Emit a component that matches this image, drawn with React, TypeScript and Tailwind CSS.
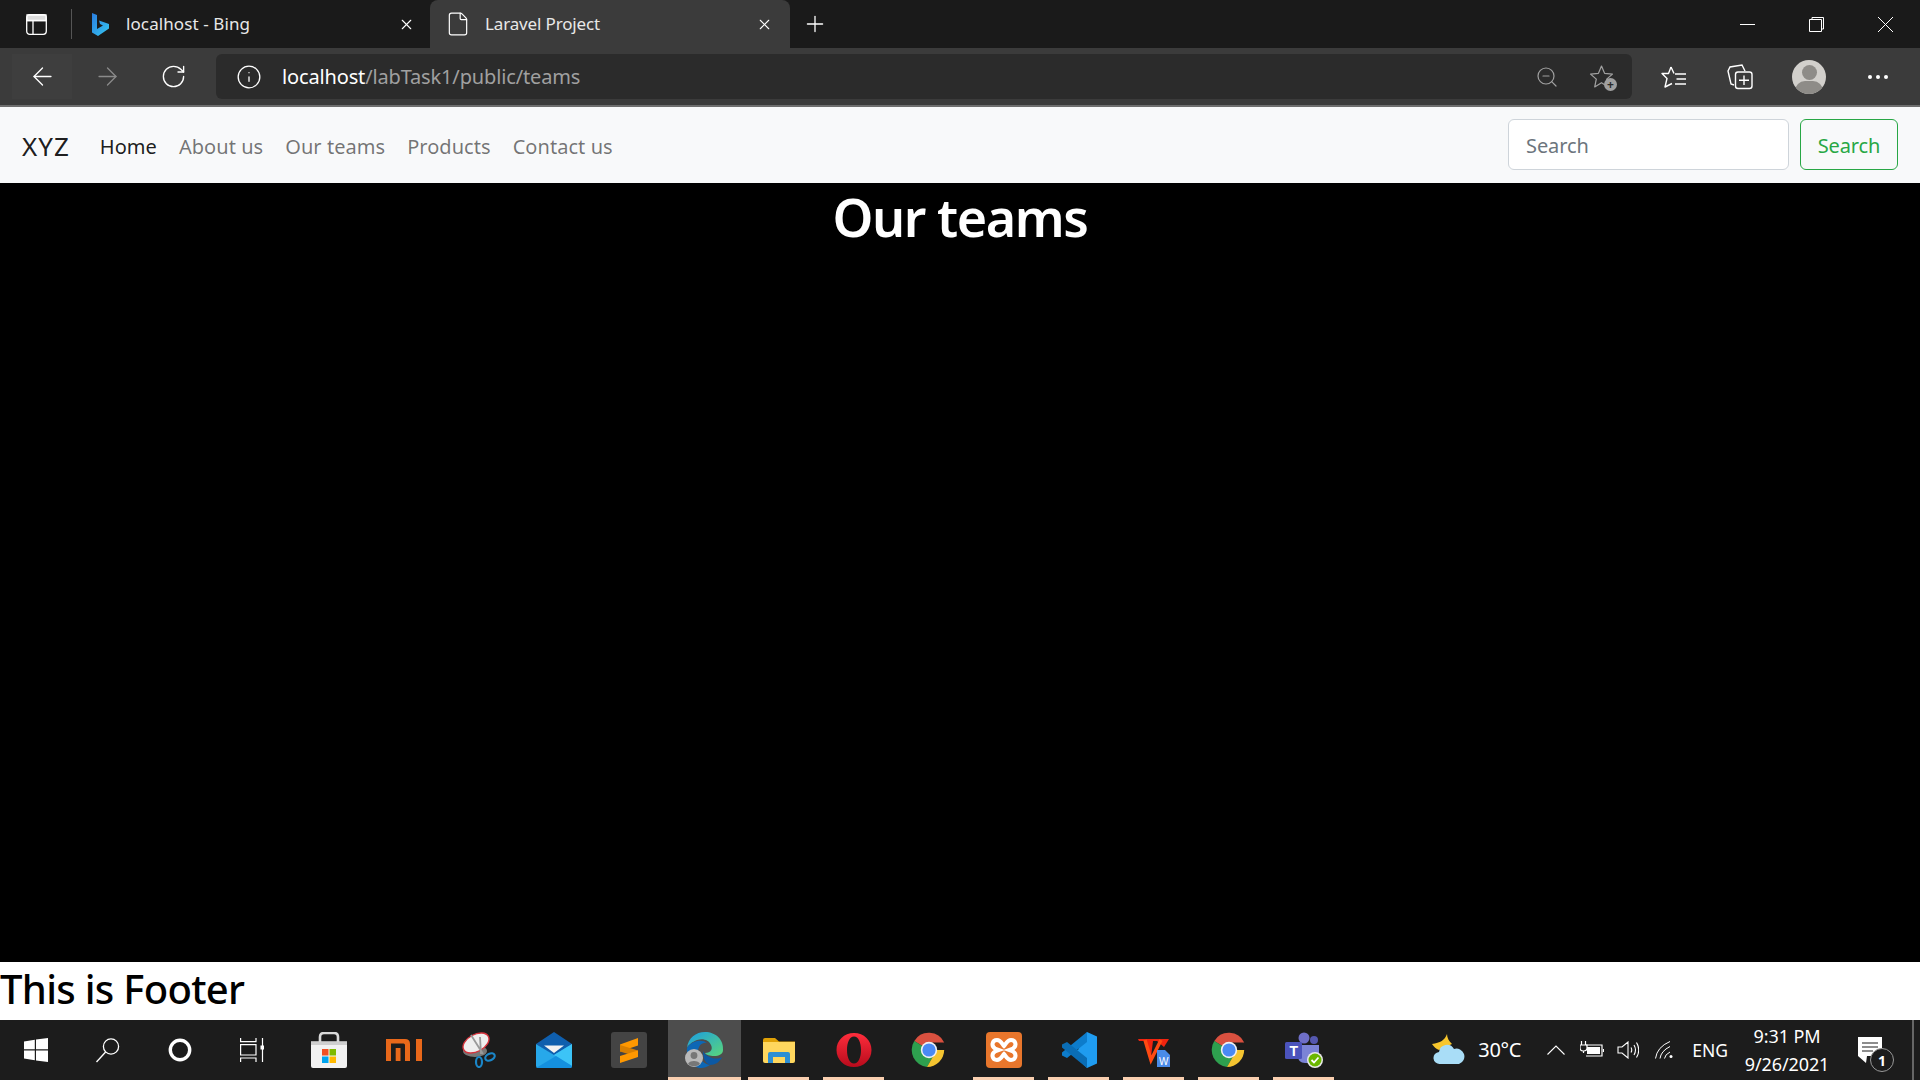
import { ArrowLeft, ArrowRight, File, Info, Plus, RotateCw, X, ZoomOut } from "lucide-react";

const navLinks = ["About us", "Our teams", "Products", "Contact us"];

const WinLogo = () => (
    <svg width="24" height="24" viewBox="0 0 24 24" fill="#fff">
        <path d="M0 3.4 10.8 1.7V11.3H0ZM12 1.5 24 0V11.3H12ZM0 12.6H10.8V22.2L0 20.6ZM12 12.6H24V24L12 22.4Z" />
    </svg>
);

const TaskSearch = () => (
    <svg width="26" height="26" viewBox="0 0 26 26" fill="none" stroke="#fff" strokeWidth="1.3">
        <circle cx="16" cy="9.5" r="7.6" />
        <path d="M10.6 15 1.5 25" />
    </svg>
);

const Cortana = () => (
    <svg width="24" height="24" viewBox="0 0 24 24" fill="none">
        <circle cx="12" cy="12" r="9.7" stroke="#fff" strokeWidth="3.4" />
    </svg>
);

const TaskView = () => (
    <svg width="24" height="24" viewBox="0 0 24 24" fill="none" stroke="#fff" strokeWidth="1.2">
        <path d="M.6 0V3.6H16V0M.6 6.6H16V17H.6ZM.6 24V20H16V24M22.5 0V24" />
        <rect x="20.5" y="7.5" width="4" height="4" fill="#fff" stroke="none" />
    </svg>
);

const Store = () => (
    <svg width="36" height="36" viewBox="0 0 36 36">
        <path d="M9 12V5q0-4 4-4h10q4 0 4 4v7" fill="none" stroke="#d9d9d9" strokeWidth="2.6" />
        <path d="M0 9.5H36V34q0 2-2 2H2q-2 0-2-2Z" fill="#f2f2f2" />
        <path d="M0 9.5H36V13H0Z" fill="#cfcfcf" />
        <rect x="11" y="17" width="6.5" height="6.5" fill="#f25022" />
        <rect x="18.5" y="17" width="6.5" height="6.5" fill="#7fba00" />
        <rect x="11" y="24.5" width="6.5" height="6.5" fill="#00a4ef" />
        <rect x="18.5" y="24.5" width="6.5" height="6.5" fill="#ffb900" />
    </svg>
);

const Mi = () => (
    <svg width="36" height="36" viewBox="0 0 36 36" fill="#e8681a">
        <path d="M0 7H19Q24 7 24 12V29H19V13Q19 11.500 17.500 11.500H5V29H0Z" />
        <path d="M9.700 16H14.500V29H9.700ZM30 7H36V29H30Z" />
    </svg>
);

const Snip = () => (
    <svg width="36" height="36" viewBox="0 0 36 36" fill="none">
        <ellipse cx="14" cy="19" rx="12" ry="6" fill="#777" />
        <ellipse cx="15" cy="11" rx="14" ry="8.500" transform="rotate(-28 15 11)" fill="#eee" stroke="#d5333c" strokeWidth="1.400" />
        <path d="M10 3 22 22M19 5 20 22" stroke="#999" strokeWidth="1.800" />
        <ellipse cx="18" cy="30" rx="3" ry="5" stroke="#1b86c8" strokeWidth="2.200" />
        <ellipse cx="29" cy="25" rx="5" ry="3.200" stroke="#1b86c8" strokeWidth="2.200" transform="rotate(-25 29 25)" />
    </svg>
);

const Mail = () => (
    <svg width="36" height="36" viewBox="0 0 36 36">
        <path d="M0 12 18 0 36 12 18 24Z" fill="#0f5fae" />
        <path d="M8 13.500H28L18 21Z" fill="#f2f2f2" />
        <path d="M0 12 18 23 36 12V34q0 2-2 2H2q-2 0-2-2Z" fill="#27a8ea" />
        <path d="M18 23 36 12V34Z" fill="#3cc4f7" />
        <path d="M0 36H34q2 0 2-2L20 24Z" fill="#1490df" />
    </svg>
);

const Sublime = () => (
    <svg width="36" height="36" viewBox="0 0 36 36">
        <rect width="36" height="36" rx="3" fill="#444" />
        <path d="M27 6V13.500L9 19.500V12.500Z" fill="#ff9800" />
        <path d="M9 13 27 18.500V25L9 19.500Z" fill="#d97f00" />
        <path d="M27 18.500V25L9 31V24Z" fill="#ff9800" />
    </svg>
);

const Edge = () => (
    <svg width="40" height="36" viewBox="0 0 40 36">
        <defs>
            <linearGradient id="edgeTop" x1="0" y1="0" x2="1" y2="1">
                <stop offset="0" stopColor="#1b9de2" />
                <stop offset="1" stopColor="#5ad67a" />
            </linearGradient>
        </defs>
        <path d="M2 16C3 6 11 0 20 0c11 0 19 8 18 18 0 4-4 6-9 6-4 0-8-1-9-3 6 0 8-4 6-8C24 8 18 6 12 8 7 10 3 13 2 16Z" fill="url(#edgeTop)" />
        <path d="M2 16C7 8 17 7 22 11c-5-1-9 3-9 9 0 7 6 12 12 13-3 2-6 3-9 3C7 36 1 26 2 16Z" fill="#0d67b5" />
        <path d="M25 33c5 0 10-3 12-8-3 2-9 2-12 0-3-1-6-3-7-6 0 7 2 12 7 14Z" fill="#0c59a4" />
        <circle cx="9" cy="26" r="9" fill="#b9b9b9" />
        <circle cx="9" cy="23.500" r="3.400" fill="#777" />
        <path d="M3 32c1-4 11-4 12 0-3 3-9 3-12 0Z" fill="#777" />
    </svg>
);

const Explorer = () => (
    <svg width="36" height="36" viewBox="0 0 36 36">
        <path d="M2 8q0-2 2-2H14L18 9.500H34V13H2Z" fill="#e0a106" />
        <path d="M2 10H34V29q0 2-2 2H4q-2 0-2-2Z" fill="#ffd75e" />
        <path d="M7 31V22q0-2 2-2H27q2 0 2 2V31H24V25H12V31Z" fill="#2d8fd5" />
        <rect x="12" y="25" width="12" height="6" fill="#ffd75e" />
    </svg>
);

const Opera = () => (
    <svg width="36" height="36" viewBox="0 0 36 36">
        <defs>
            <linearGradient id="operaFill" x1="0" y1="0" x2="0" y2="1">
                <stop offset="0" stopColor="#ff2d3c" />
                <stop offset="1" stopColor="#b80b1c" />
            </linearGradient>
        </defs>
        <path fillRule="evenodd" d="M18 1C28 1 35.500 8.500 35.500 18S28 35 18 35 .5 27.500 .5 18 8 1 18 1ZM18 4.500C13.500 4.500 11 10.500 11 18S13.500 31.500 18 31.500 25 25.500 25 18 22.500 4.500 18 4.500Z" fill="url(#operaFill)" />
    </svg>
);

const Chrome = () => (
    <svg width="36" height="36" viewBox="0 0 36 36">
        <path d="M18 18 3.300 9A17 17 0 0 1 33.200 10.500H18Z" fill="#d9503f" />
        <path d="M18 18 3.300 9A17 17 0 0 0 16 34.900L23.500 22Z" fill="#2e9f4f" />
        <path d="M18 18H33.200A17 17 0 0 1 16 34.900L24 21Z" fill="#f4c430" />
        <circle cx="18" cy="18" r="8.200" fill="#f1f1f1" />
        <circle cx="18" cy="18" r="6.600" fill="#4a8af4" />
    </svg>
);

const Xampp = () => (
    <svg width="36" height="36" viewBox="0 0 36 36" fill="none">
        <rect width="36" height="36" rx="4" fill="#e8762c" />
        <path d="M11 8C6 8 5 14 9 16.500L13 18 9 19.500C5 22 6 28 11 28 15 28 16 24 18 22 20 24 21 28 25 28 30 28 31 22 27 19.500L23 18 27 16.500C31 14 30 8 25 8 21 8 20 12 18 14 16 12 15 8 11 8Z" stroke="#fff" strokeWidth="4" />
    </svg>
);

const VsCode = () => (
    <svg width="36" height="36" viewBox="0 0 36 36">
        <path d="M26 0 36 4.500V31.500L26 36 9 19.500 17 18Z" fill="#1f9cf0" />
        <path d="M26 0V10L6 26 1 23.500V20.500Z" fill="#0d7ccb" />
        <path d="M1 12.500 6 10 26 26V36L1 15.500Z" fill="#0a6db5" />
    </svg>
);

const Wps = () => (
    <svg width="36" height="36" viewBox="0 0 36 36" fill="none">
        <path d="M2 7H33L28 15 21 9H17L15 25 8 9 3 9Z" fill="#f0240f" />
        <path d="M9 8 15 28 25 8" stroke="#ff4a12" strokeWidth="3.500" />
        <path d="M21 18H29L34 23V35H21Z" fill="#4a8be8" />
        <text x="23" y="33" fontSize="10" fill="#fff" fontFamily="Liberation Sans, sans-serif">W</text>
    </svg>
);

const Teams = () => (
    <svg width="38" height="36" viewBox="0 0 38 36">
        <circle cx="19" cy="6" r="5.500" fill="#6f6fc8" />
        <circle cx="29" cy="8" r="4" fill="#5558af" />
        <path d="M13 13H34V24q0 7-7 7H20q-7 0-7-7Z" fill="#7b83d6" />
        <rect y="10" width="17" height="17" rx="1.500" fill="#4b53bc" />
        <text x="4.500" y="23.500" fontSize="14" fontWeight="700" fill="#fff" fontFamily="Liberation Sans, sans-serif">T</text>
        <circle cx="30" cy="28" r="8" fill="#e9e9e9" />
        <circle cx="30" cy="28" r="6.500" fill="#6bb700" />
        <path d="M26.500 28 29 30.500 33.500 25.500" fill="none" stroke="#fff" strokeWidth="1.800" />
    </svg>
);

const Weather = () => (
    <svg width="34" height="32" viewBox="0 0 34 32">
        <path d="M15 0C13 6 8 9 0 10 2 13 4 15 7 16L20 10C17 7 15 4 15 0Z" fill="#f7c62d" />
        <path d="M8 30a6 6 0 0 1-1-12 8 8 0 0 1 15-3 7.500 7.500 0 0 1 5 15Z" fill="#a9ddf7" />
    </svg>
);

const pinned = [
    { icon: <Store />, on: false },
    { icon: <Mi />, on: false },
    { icon: <Snip />, on: false },
    { icon: <Mail />, on: false },
    { icon: <Sublime />, on: false },
    { icon: <Edge />, on: true, active: true },
    { icon: <Explorer />, on: true },
    { icon: <Opera />, on: true },
    { icon: <Chrome />, on: false },
    { icon: <Xampp />, on: true },
    { icon: <VsCode />, on: true },
    { icon: <Wps />, on: true },
    { icon: <Chrome />, on: true },
    { icon: <Teams />, on: true },
];

const App = () => {
    return (
        <div className="flex h-screen flex-col overflow-hidden font-['Noto_Sans',sans-serif]">
            {/* tab strip */}
            <div className="flex h-12 shrink-0 items-center bg-[#1a1a1a] text-white">
                <div className="flex w-[71px] justify-center pl-[1px]">
                    <svg width="21" height="21" viewBox="0 0 21 21" fill="none" stroke="#fff" strokeWidth="1.300">
                        <rect x=".7" y=".7" width="19.600" height="19.600" rx="3" />
                        <path d="M1 6.500H20M7 6.500V20" />
                        <path d="M1 1H20V6.500H1Z" fill="#ddd" />
                    </svg>
                </div>
                <div className="h-[30px] w-px bg-[#555]" />
                <div className="flex h-full w-[358px] items-center pl-5">
                    <svg width="17" height="23" viewBox="0 0 17 23">
                        <defs>
                            <linearGradient id="bing" x1="0" y1="0" x2="1" y2="1">
                                <stop offset="0" stopColor="#2a7de1" />
                                <stop offset="1" stopColor="#36c7ef" />
                            </linearGradient>
                        </defs>
                        <path d="M0 0 5 2V16L11 12.500 8 11 7 7.500 17 11V15.500L6 23 0 19.500Z" fill="url(#bing)" />
                    </svg>
                    <span className="ml-[17px] flex-1 text-[17px] tracking-[0.1px] text-[#e8e8e8]">localhost - Bing</span>
                    <X size={17} strokeWidth={1.500} className="mr-[15px]" />
                </div>
                <div className="flex h-full w-[360px] items-center rounded-t-lg bg-[#3b3b3b] pl-[15px]">
                    <File size={26} strokeWidth={1.100} />
                    <span className="ml-[14px] flex-1 text-[17px] tracking-[-0.15px] text-[#e8e8e8]">Laravel Project</span>
                    <X size={17} strokeWidth={1.500} className="mr-[17px]" />
                </div>
                <Plus size={26} strokeWidth={1.200} className="ml-[12px]" />
                <div className="flex-1" />
                <div className="mr-[27px] flex items-center gap-[54px]">
                    <svg width="15" height="15" viewBox="0 0 15 15" stroke="#fff" fill="none"><path d="M0 7.500H15" /></svg>
                    <svg width="15" height="15" viewBox="0 0 15 15" stroke="#fff" fill="none"><path d="M.5 2.500H12.500V14.500H.5ZM3 2.500V.5H14.500V12H12.500" /></svg>
                    <svg width="15" height="15" viewBox="0 0 15 15" stroke="#fff" fill="none"><path d="M0 0 15 15M15 0 0 15" /></svg>
                </div>
            </div>

            {/* address toolbar */}
            <div className="flex h-[59px] shrink-0 items-center border-b-2 border-[#6e6e6e] bg-[#3b3b3b] text-white">
                <div className="ml-3 flex h-[45px] w-[60px] items-center justify-center bg-[#3e3e3e]">
                    <ArrowLeft size={29} strokeWidth={1.100} />
                </div>
                <ArrowRight size={29} strokeWidth={1.100} className="ml-[21px] text-[#8a8a8a]" />
                <RotateCw size={27} strokeWidth={1.200} className="ml-[38px]" />
                <div className="ml-[29px] flex h-[45px] w-[1416px] items-center rounded-md bg-[#2b2b2b] pl-[20px]">
                    <Info size={26} strokeWidth={1.200} />
                    <span className="ml-[20px] flex-1 text-[20px] tracking-[-0.15px] text-[#a0a0a0]">
                        <span className="text-white">localhost</span>/labTask1/public/teams
                    </span>
                    <ZoomOut size={24} strokeWidth={1.200} className="text-[#a0a0a0]" />
                    <div className="relative ml-[30px] mr-[18px]">
                        <svg width="25" height="25" viewBox="0 0 24 24" fill="none" stroke="#a0a0a0" strokeWidth="1.200" strokeLinejoin="round">
                            <path d="M12 2 15 9 22.500 9.700 17 14.500 18.500 22 12 18 5.500 22 7 14.500 1.500 9.700 9 9Z" />
                        </svg>
                        <span className="absolute -right-[3px] -bottom-[2px] flex h-[13px] w-[13px] items-center justify-center rounded-full bg-[#a0a0a0] text-[12px] leading-none font-bold text-[#2b2b2b]">+</span>
                    </div>
                </div>
                <div className="ml-[29px] flex items-center">
                    <svg width="26" height="26" viewBox="0 0 26 26" fill="none" stroke="#fff" strokeWidth="1.400" strokeLinejoin="round">
                        <path d="M10 3 7.500 9.500H1L6 14.500 4 23 11 19.500M10 3 13 9.500M14 10H25M15.500 15H25M14 20H25" />
                    </svg>
                    <svg className="ml-[40px]" width="26" height="26" viewBox="0 0 26 26" fill="none" stroke="#fff" strokeWidth="1.400">
                        <path d="M7 21 4 20 1 7 3 3 15 1 18 7" />
                        <rect x="8.500" y="8" width="16.500" height="16.500" rx="2.500" fill="#3b3b3b" />
                        <path d="M17 11.500V21M12 16.200H22" />
                    </svg>
                    <div className="relative ml-[39px] h-[34px] w-[34px] overflow-hidden rounded-full bg-[#d2d0cc]">
                        <div className="mx-auto mt-[5px] h-[15px] w-[15px] rounded-full bg-[#8e8c88]" />
                        <div className="mx-auto mt-[1px] h-[20px] w-[28px] rounded-full bg-[#8e8c88]" />
                    </div>
                    <div className="ml-[42px] flex gap-[4px]">
                        <div className="h-[4px] w-[4px] rounded-full bg-white" />
                        <div className="h-[4px] w-[4px] rounded-full bg-white" />
                        <div className="h-[4px] w-[4px] rounded-full bg-white" />
                    </div>
                </div>
            </div>

            {/* site navbar */}
            <nav className="flex h-[76px] shrink-0 items-center justify-between bg-[#f8f9fa] pr-[22px] pl-[22px]">
                <div className="flex items-center pt-[3px]">
                    <a className="mr-[30px] text-[26px] tracking-[1px] text-[#000000e6]">XYZ</a>
                    <ul className="flex gap-[22px] text-[20px] tracking-[0.05px] text-[#0000008c]">
                        <li className="text-[#000000e6]">Home</li>
                        {navLinks.map((link) => (
                            <li key={link}>{link}</li>
                        ))}
                    </ul>
                </div>
                <form className="mb-[1px] flex gap-[11px]">
                    <input
                        placeholder="Search"
                        className="h-[51px] w-[281px] rounded-md border border-[#ced4da] bg-white pt-[2px] pr-4 pl-[17px] text-[20px] tracking-[-0.1px] placeholder:text-[#6c757d]"
                    />
                    <button type="button" className="h-[51px] w-[98px] rounded-md border border-[#28a745] pt-[2px] text-[20px] tracking-[-0.1px] text-[#28a745]">
                        Search
                    </button>
                </form>
            </nav>

            {/* page content */}
            <main className="flex-1 bg-black text-center">
                <h1 className="mt-[1px] text-[52px] leading-[65px] font-semibold tracking-[-1.400px] text-white">Our teams</h1>
            </main>
            <footer className="h-[58px] shrink-0 bg-white">
                <h2 className="text-[40px] leading-[54px] font-medium tracking-[-0.7px] text-black">This is Footer</h2>
            </footer>

            {/* windows taskbar */}
            <div className="flex h-[60px] shrink-0 items-center bg-[#1c1c1c] text-white">
                <div className="flex w-[72px] justify-center"><WinLogo /></div>
                <div className="flex w-[72px] justify-center"><TaskSearch /></div>
                <div className="flex w-[72px] justify-center"><Cortana /></div>
                <div className="flex w-[72px] justify-center"><TaskView /></div>
                <div className="ml-[3px] flex">
                    {pinned.map((item, index) => (
                        <div key={index} className={`relative flex h-[60px] items-center justify-center ${item.active ? "ml-[2px] w-[73px] bg-[#4d4d4d]" : "w-[75px]"}`}>
                            {item.icon}
                            {item.on && (
                                <div className={`absolute bottom-0 h-[3px] bg-[#f9cfb0] ${item.active ? "inset-x-0" : "inset-x-[7px]"}`} />
                            )}
                        </div>
                    ))}
                </div>
                <div className="flex-1" />
                <Weather />
                <span className="ml-[12px] text-[20px] tracking-[-0.3px]">30°C</span>
                <svg className="ml-[26px]" width="18" height="10" viewBox="0 0 18 10" fill="none" stroke="#fff" strokeWidth="1.100"><path d="M.5 9.500 9 1 17.500 9.500" /></svg>
                <svg className="ml-[15px]" width="24" height="18" viewBox="0 0 24 18" fill="none" stroke="#fff" strokeWidth="1.200">
                    <path d="M1.500 0V4M5.500 0V4M0 4H7V7Q7 10 3.500 10T0 7ZM3.500 10V12" />
                    <path d="M6 4H22V15H6" />
                    <rect x="7" y="6" width="13" height="7" fill="#fff" stroke="none" />
                    <path d="M23.500 8V11" />
                </svg>
                <svg className="ml-[13px]" width="22" height="18" viewBox="0 0 22 18" fill="none" stroke="#fff" strokeWidth="1.100">
                    <path d="M1 6H5L11 1V17L5 12H1ZM14 6.500Q15.500 9 14 11.500M17 4Q20 9 17 14M19.500 1.500Q24 9 19.500 16.500" />
                </svg>
                <svg className="ml-[16px]" width="21" height="18" viewBox="0 0 21 18" fill="none" stroke="#fff" strokeWidth="1">
                    <path d="M.5 17.500Q2 6 15 .5M5 17.500Q6 10 15 5.500M9.500 17.500Q10 13.500 15 11" />
                    <circle cx="16" cy="15.500" r="1.500" fill="#fff" stroke="none" />
                </svg>
                <span className="ml-[16px] text-[17.500px]">ENG</span>
                <div className="ml-[17px] flex w-[84px] flex-col items-center text-[18px] leading-[28px] tracking-[-0.1px]">
                    <span>9:31 PM</span>
                    <span>9/26/2021</span>
                </div>
                <div className="relative ml-[29px] mr-[30px] h-[26px] w-[24px]">
                    <svg width="24" height="26" viewBox="0 0 24 26">
                        <path d="M0 0H24V19H9L8 26 0 19Z" fill="#fff" />
                        <path d="M4 6H20M4 10H20M4 14H15" stroke="#1c1c1c" strokeWidth="1.200" />
                    </svg>
                    <span className="absolute -right-[12px] -bottom-[9px] flex h-[24px] w-[24px] items-center justify-center rounded-full border border-[#999] bg-[#1c1c1c] text-[14px] font-bold">1</span>
                </div>
                <div className="mr-[6px] h-full w-[2px] bg-[#666]" />
            </div>
        </div>
    );
};

export default App;
